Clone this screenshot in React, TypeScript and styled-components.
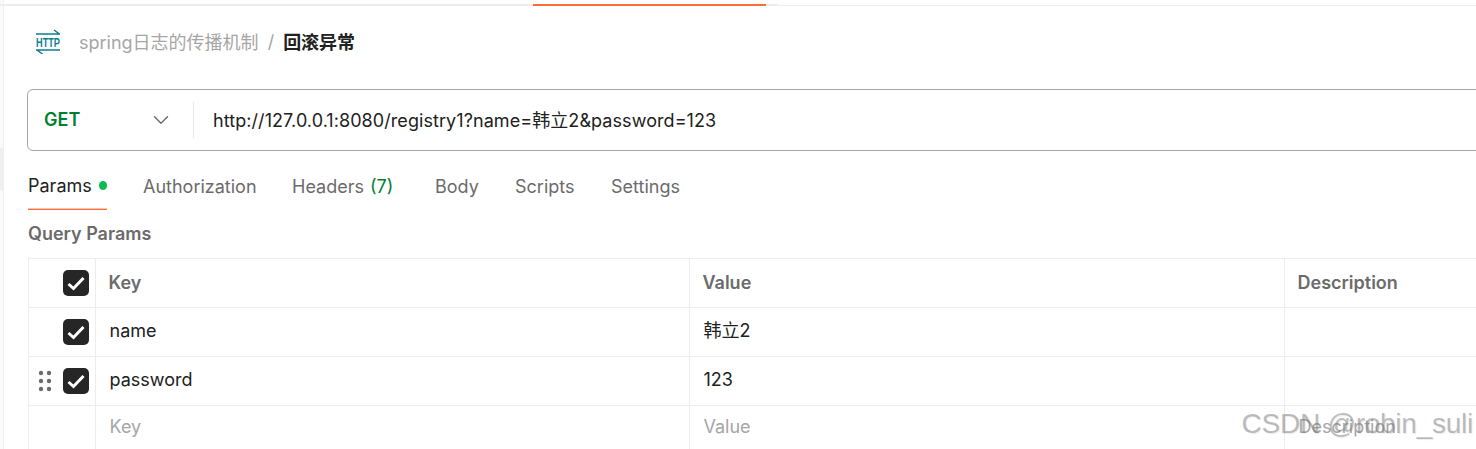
import { createGlobalStyle, styled } from "styled-components";
import { ChevronDown } from "lucide-react";

const GlobalStyle = createGlobalStyle`
  html, body {
    margin: 0;
    height: 449px;
    overflow: hidden;
    background: #fff;
  }

  body {
    font-family: Inter, "Noto Sans CJK SC", sans-serif;
    color: #212121;
  }
`;

const tabs = [
  { label: "Authorization", width: 113 },
  { label: "Headers", count: "(7)", width: 107 },
  { label: "Body", width: 44 },
  { label: "Scripts", width: 60 },
  { label: "Settings", width: 70 },
];

const rows = [
  { key: "name", value: "韩立2" },
  { key: "password", value: "123", drag: true },
];

const CheckBox = () => (
  <CheckBoxStyled>
    <svg width="18" height="15" viewBox="0 0 18 15" fill="none">
      <path d="M1.5 8L6.5 12.5L16.5 2" stroke="#fff" strokeWidth="3" />
    </svg>
  </CheckBoxStyled>
);

const DragHandle = () => (
  <svg width="14" height="22" viewBox="0 0 14 22" fill="#6b6b6b">
    <circle cx="3" cy="3" r="2.2" />
    <circle cx="11" cy="3" r="2.2" />
    <circle cx="3" cy="11" r="2.2" />
    <circle cx="11" cy="11" r="2.2" />
    <circle cx="3" cy="19" r="2.2" />
    <circle cx="11" cy="19" r="2.2" />
  </svg>
);

const HttpIcon = () => (
  <svg width="26" height="26" viewBox="0 0 26 26" fill="none">
    <path d="M0 6H24M18 2L23.5 6" stroke="#0e7f8f" strokeWidth="1.5" />
    <text
      x="0"
      y="19"
      fill="#0e7f8f"
      fontFamily="Liberation Sans, sans-serif"
      fontSize="13.5"
      fontWeight="700"
      textLength="24"
      lengthAdjust="spacingAndGlyphs"
    >
      HTTP
    </text>
    <path d="M0 22H24M1 22L6.5 26" stroke="#0e7f8f" strokeWidth="1.5" />
  </svg>
);

export default function App() {
  return (
    <>
      <GlobalStyle />
      <Shell>
        <Gutter>
          <GutterStrip />
          <GutterGrip />
        </Gutter>
        <Page>
          <TopStrip>
            <TopLead />
            <TopActive />
            <TopTail />
            <TopRest />
          </TopStrip>

          <Breadcrumb>
            <HttpIcon />
            <Parent>spring日志的传播机制</Parent>
            <Slash>/</Slash>
            <Current>回滚异常</Current>
          </Breadcrumb>

          <UrlBar>
            <Method>
              <MethodName>GET</MethodName>
              <ChevronDown size={26} color="#6b6b6b" strokeWidth={1.3} />
            </Method>
            <Url>http://127.0.0.1:8080/registry1?name=韩立2&amp;password=123</Url>
          </UrlBar>

          <Tabs>
            <ActiveTab>
              Params
              <Dot />
            </ActiveTab>
            {tabs.map((tab) => (
              <Tab key={tab.label} $width={tab.width}>
                {tab.label}
                {tab.count && <Count>{tab.count}</Count>}
              </Tab>
            ))}
          </Tabs>

          <SectionTitle>Query Params</SectionTitle>

          <Table>
            <Row>
              <HandleCell>
                <CheckBox />
              </HandleCell>
              <HeadCell>Key</HeadCell>
              <HeadCell>Value</HeadCell>
              <HeadCell>Description</HeadCell>
            </Row>
            {rows.map((row) => (
              <Row key={row.key}>
                <HandleCell>
                  {row.drag && (
                    <DragSlot>
                      <DragHandle />
                    </DragSlot>
                  )}
                  <CheckBox />
                </HandleCell>
                <Cell>{row.key}</Cell>
                <Cell>{row.value}</Cell>
                <Cell />
              </Row>
            ))}
            <Row>
              <HandleCell />
              <Cell $placeholder>Key</Cell>
              <Cell $placeholder>Value</Cell>
              <Cell $placeholder>Description</Cell>
            </Row>
          </Table>

          <Watermark>CSDN @robin_suli</Watermark>
        </Page>
      </Shell>
    </>
  );
}

const Shell = styled.div`
  display: flex;
  width: 1476px;
  height: 449px;
  overflow: hidden;
`;

const Gutter = styled.div`
  flex: none;
  width: 3px;
  padding-top: 4px;
  background: #fafafa;
`;

const GutterStrip = styled.div`
  height: 2px;
  background: #ededed;
`;

const GutterGrip = styled.div`
  height: 42px;
  margin-top: 142px;
  background: #efefef;
`;

const Page = styled.div`
  position: relative;
  flex: 1;
  min-width: 0;
  overflow: hidden;
  padding-left: 23px;
  border-left: 1px solid #f0f0f0;
  background: #fff;
`;

const TopStrip = styled.div`
  display: flex;
  align-items: flex-start;
  box-sizing: border-box;
  height: 6px;
  margin-left: -23px;
  padding-top: 4px;
`;

const TopLead = styled.div`
  width: 529px;
  height: 2px;
  background: #ededed;
`;

const TopActive = styled.div`
  width: 233px;
  height: 2px;
  background: #ff6c37;
`;

const TopTail = styled.div`
  width: 12px;
  height: 2px;
  background: #ededed;
`;

const TopRest = styled.div`
  flex: 1;
  height: 1px;
  margin-top: 1px;
  background: #ededed;
`;

const Breadcrumb = styled.div`
  display: flex;
  align-items: center;
  height: 24px;
  margin-top: 23px;
  padding-left: 9px;
  font-size: 18px;
`;

const Parent = styled.span`
  margin-left: 17px;
  color: #a6a6a6;
`;

const Slash = styled.span`
  margin: 0 9px;
  color: #a6a6a6;
`;

const Current = styled.span`
  color: #212121;
  font-weight: 600;
`;

const UrlBar = styled.div`
  display: flex;
  align-items: center;
  box-sizing: border-box;
  width: 1500px;
  height: 62px;
  margin-top: 36px;
  border: 1px solid #a6a6a6;
  border-radius: 6px;
`;

const Method = styled.div`
  display: flex;
  align-items: center;
  justify-content: space-between;
  box-sizing: border-box;
  width: 166px;
  height: 36px;
  padding: 0 19px 0 16px;
  border-right: 1px solid #e6e6e6;
`;

const MethodName = styled.span`
  padding-bottom: 1px;
  color: #007f31;
  font-size: 18px;
  font-weight: 600;
`;

const Url = styled.div`
  margin-left: 19px;
  padding-bottom: 2px;
  font-size: 18px;
  letter-spacing: 0.07px;
`;

const Tabs = styled.div`
  display: flex;
  height: 59px;
`;

const ActiveTab = styled.div`
  display: flex;
  align-items: center;
  gap: 7px;
  box-sizing: border-box;
  width: 79px;
  height: 59px;
  margin-left: 1px;
  margin-right: 36px;
  padding-top: 11px;
  border-bottom: 1px solid #ff6c37;
  box-shadow: inset 0 -1px 0 #ffc4ae;
  font-size: 18px;
`;

const Dot = styled.span`
  width: 9px;
  height: 9px;
  border-radius: 50%;
  background: #0cbb52;
`;

const Tab = styled.div<{ $width: number }>`
  display: flex;
  align-items: center;
  box-sizing: border-box;
  width: ${({ $width }) => $width}px;
  height: 59px;
  margin-right: 36px;
  padding-top: 11px;
  color: #6b6b6b;
  font-size: 18px;
  white-space: nowrap;
`;

const Count = styled.span`
  margin-left: 6px;
  color: #007f31;
`;

const SectionTitle = styled.div`
  height: 24px;
  margin-top: 12px;
  margin-left: 1px;
  color: #6b6b6b;
  font-size: 18px;
  font-weight: 600;
  line-height: 24px;
`;

const Table = styled.div`
  width: 1500px;
  margin-top: 12px;
  margin-left: 1px;
  border-top: 1px solid #ededed;
  border-left: 1px solid #ededed;
`;

const Row = styled.div`
  display: grid;
  grid-template-columns: 67px 594px 595px 1fr;
  height: 49px;
  box-sizing: border-box;
  border-bottom: 1px solid #ededed;
`;

const HandleCell = styled.div`
  display: flex;
  align-items: center;
  justify-content: flex-end;
  padding-right: 6px;
  border-right: 1px solid #ededed;
`;

const DragSlot = styled.div`
  display: flex;
  margin-right: 11px;
`;

const CheckBoxStyled = styled.span`
  display: flex;
  align-items: center;
  justify-content: center;
  width: 26px;
  height: 26px;
  border-radius: 5px;
  background: #262626;
`;

const HeadCell = styled.div`
  display: flex;
  align-items: center;
  padding-left: 12.5px;
  padding-bottom: 1px;
  border-right: 1px solid #ededed;
  color: #6b6b6b;
  font-size: 18px;
  font-weight: 600;
`;

const Cell = styled.div<{ $placeholder?: boolean }>`
  display: flex;
  align-items: center;
  padding-left: 13.5px;
  padding-bottom: ${({ $placeholder }) => ($placeholder ? 6 : 2)}px;
  border-right: 1px solid #ededed;
  color: ${({ $placeholder }) => ($placeholder ? "#a6a6a6" : "#212121")};
  font-size: 18px;
  line-height: 22px;
`;

const Watermark = styled.div`
  position: absolute;
  right: 3px;
  top: 408px;
  color: rgba(130, 130, 130, 0.5);
  font-family: "Liberation Sans", sans-serif;
  font-size: 28px;
  letter-spacing: -0.25px;
  text-shadow: 1px 1px 1px rgba(0, 0, 0, 0.08);
  white-space: nowrap;
`;
